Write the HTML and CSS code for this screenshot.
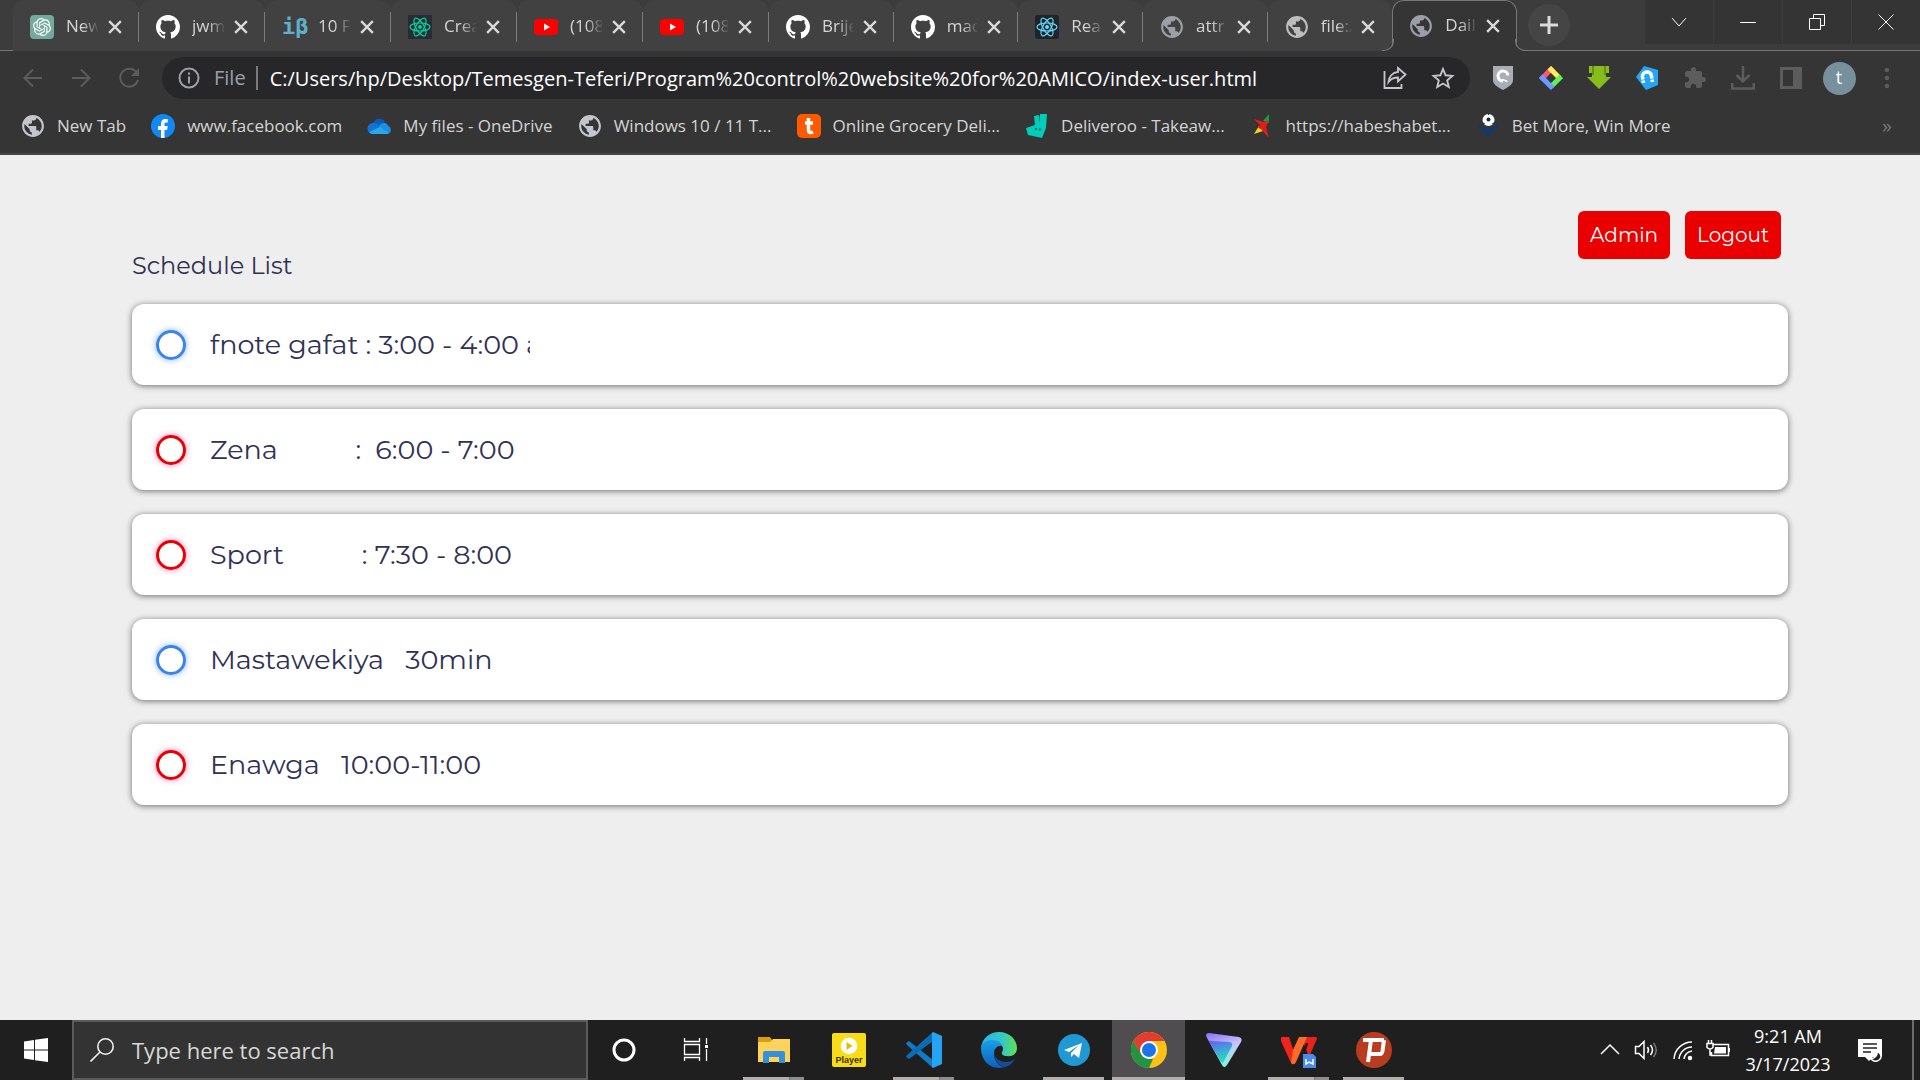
FILE: index.html
```html
<!DOCTYPE html>
<html lang="en">
<head>
<meta charset="utf-8">
<title>Daily schedule</title>
<link rel="stylesheet" href="styles.css">
</head>
<body>
<svg class="defs" aria-hidden="true">
  <symbol id="globe" viewBox="1 1 22 22"><path fill="currentColor" d="M12 2C6.480 2 2 6.480 2 12s4.480 10 10 10 10-4.480 10-10S17.520 2 12 2zm-1 17.930c-3.950-.49-7-3.850-7-7.930 0-.62.08-1.210.21-1.790L9 15v1c0 1.100.9 2 2 2v1.930zm6.900-2.540c-.26-.81-1-1.390-1.900-1.390h-1v-3c0-.55-.45-1-1-1H8v-2h2c.55 0 1-.45 1-1V7h2c1.100 0 2-.9 2-2v-.41c2.930 1.190 5 4.060 5 7.410 0 2.080-.8 3.970-2.100 5.390z"/></symbol>
  <symbol id="github" viewBox="0 0 16 16"><path fill="#fff" d="M8 0C3.58 0 0 3.58 0 8c0 3.54 2.29 6.53 5.47 7.59.4.07.55-.17.55-.38 0-.19-.01-.82-.01-1.49-2.01.37-2.53-.49-2.69-.94-.09-.23-.48-.94-.82-1.13-.28-.15-.68-.52-.01-.53.63-.01 1.08.58 1.23.82.72 1.21 1.87.87 2.33.66.07-.52.28-.87.51-1.07-1.78-.2-3.64-.89-3.64-3.95 0-.87.31-1.59.82-2.15-.08-.2-.36-1.02.08-2.12 0 0 .67-.21 2.2.82.64-.18 1.32-.27 2-.27.68 0 1.36.09 2 .27 1.53-1.04 2.2-.82 2.2-.82.44 1.1.16 1.92.08 2.12.51.56.82 1.27.82 2.15 0 3.07-1.87 3.75-3.65 3.95.29.25.54.73.54 1.48 0 1.07-.01 1.93-.01 2.2 0 .21.15.46.55.38A8.013 8.013 0 0016 8c0-4.42-3.58-8-8-8z"/></symbol>
  <symbol id="youtube" viewBox="0 0 24 24"><rect y="4" width="24" height="16" rx="4" fill="#f00"/><path d="M10 8.500v7l6-3.500z" fill="#fff"/></symbol>
  <symbol id="react" viewBox="0 0 24 24"><g fill="none" stroke="currentColor" stroke-width="1.200"><ellipse cx="12" cy="12" rx="10" ry="4"/><ellipse cx="12" cy="12" rx="10" ry="4" transform="rotate(60 12 12)"/><ellipse cx="12" cy="12" rx="10" ry="4" transform="rotate(120 12 12)"/></g><circle cx="12" cy="12" r="2" fill="currentColor"/></symbol>
  <symbol id="close" viewBox="0 0 12 12"><path d="M1 1l10 10M11 1L1 11" stroke="#dadada" stroke-width="2" fill="none"/></symbol>
</svg>

<header class="chrome">
  <div class="strip">
    <nav class="tabs" aria-label="Tabs">
      <div class="tab"><svg class="fav" viewBox="0 0 24 24"><rect width="24" height="24" rx="4" fill="#74aa9c"/><path transform="translate(3 3) scale(.75)" fill="#fff" d="M22.282 9.821a5.985 5.985 0 0 0-.516-4.911 6.046 6.046 0 0 0-6.510-2.900A6.065 6.065 0 0 0 4.981 4.182a5.985 5.985 0 0 0-3.998 2.900 6.046 6.046 0 0 0 .743 7.097 5.980 5.980 0 0 0 .511 4.911 6.051 6.051 0 0 0 6.515 2.900A5.985 5.985 0 0 0 13.260 24a6.056 6.056 0 0 0 5.772-4.206 5.989 5.989 0 0 0 3.998-2.900 6.056 6.056 0 0 0-.748-7.073zm-9.022 12.608a4.476 4.476 0 0 1-2.876-1.041l.142-.080 4.778-2.758a.795.795 0 0 0 .393-.681v-6.737l2.020 1.169a.071.071 0 0 1 .038.052v5.583a4.504 4.504 0 0 1-4.495 4.494zm-9.661-4.125a4.471 4.471 0 0 1-.535-3.014l.142.085 4.783 2.758a.771.771 0 0 0 .781 0l5.843-3.369v2.332a.080.080 0 0 1-.033.062L9.740 19.950a4.499 4.499 0 0 1-6.141-1.646zM2.341 7.896a4.485 4.485 0 0 1 2.366-1.973V11.600a.766.766 0 0 0 .388.677l5.814 3.354-2.020 1.169a.076.076 0 0 1-.071 0l-4.830-2.787A4.504 4.504 0 0 1 2.341 7.872zm16.596 3.856L13.104 8.364 15.119 7.200a.076.076 0 0 1 .071 0l4.830 2.791a4.494 4.494 0 0 1-.677 8.104v-5.677a.790.790 0 0 0-.407-.667zm2.011-3.023l-.142-.085-4.774-2.782a.776.776 0 0 0-.785 0L9.409 9.230V6.897a.066.066 0 0 1 .028-.062l4.830-2.787a4.499 4.499 0 0 1 6.680 4.660zM8.307 12.863l-2.020-1.164a.080.080 0 0 1-.038-.057V6.074a4.499 4.499 0 0 1 7.376-3.454l-.142.081L8.704 5.459a.795.795 0 0 0-.393.681zm1.098-2.365l2.602-1.500 2.607 1.500v2.999l-2.597 1.500-2.607-1.500Z"/></svg><a class="title" href="#">New</a><button class="x" aria-label="Close tab"><svg><use href="#close"/></svg></button></div>
      <div class="tab"><svg class="fav"><use href="#github"/></svg><a class="title" href="#">jwm</a><button class="x" aria-label="Close tab"><svg><use href="#close"/></svg></button></div>
      <div class="tab"><span class="fav ib">iβ</span><a class="title" href="#">10 F</a><button class="x" aria-label="Close tab"><svg><use href="#close"/></svg></button></div>
      <div class="tab"><svg class="fav cra"><use href="#react"/></svg><a class="title" href="#">Crea</a><button class="x" aria-label="Close tab"><svg><use href="#close"/></svg></button></div>
      <div class="tab"><svg class="fav"><use href="#youtube"/></svg><a class="title" href="#">(108</a><button class="x" aria-label="Close tab"><svg><use href="#close"/></svg></button></div>
      <div class="tab"><svg class="fav"><use href="#youtube"/></svg><a class="title" href="#">(108</a><button class="x" aria-label="Close tab"><svg><use href="#close"/></svg></button></div>
      <div class="tab"><svg class="fav"><use href="#github"/></svg><a class="title" href="#">Brije</a><button class="x" aria-label="Close tab"><svg><use href="#close"/></svg></button></div>
      <div class="tab"><svg class="fav"><use href="#github"/></svg><a class="title" href="#">mac</a><button class="x" aria-label="Close tab"><svg><use href="#close"/></svg></button></div>
      <div class="tab"><svg class="fav rct"><use href="#react"/></svg><a class="title" href="#">Rea</a><button class="x" aria-label="Close tab"><svg><use href="#close"/></svg></button></div>
      <div class="tab"><svg class="fav globe"><use href="#globe"/></svg><a class="title" href="#">attr</a><button class="x" aria-label="Close tab"><svg><use href="#close"/></svg></button></div>
      <div class="tab"><svg class="fav globe light"><use href="#globe"/></svg><a class="title" href="#">file:/</a><button class="x" aria-label="Close tab"><svg><use href="#close"/></svg></button></div>
      <div class="tab active"><svg class="fav globe"><use href="#globe"/></svg><a class="title" href="#">Dail</a><button class="x" aria-label="Close tab"><svg><use href="#close"/></svg></button></div>
    </nav>
    <button class="plus" aria-label="New tab"><svg viewBox="0 0 18 18"><path d="M9 0v18M0 9h18" stroke="#dadada" stroke-width="3"/></svg></button>
    <div class="wincontrols">
      <button aria-label="Search tabs"><svg viewBox="0 0 16 16"><path d="M1 4l7 8 7-8"/></svg></button>
      <button aria-label="Minimize"><svg viewBox="0 0 16 16"><path d="M0 8.500h16"/></svg></button>
      <button aria-label="Restore"><svg viewBox="0 0 16 16"><path d="M.5 4.500h11v11H.5zM4.500 4V.5h11v11H12"/></svg></button>
      <button aria-label="Close window"><svg viewBox="0 0 16 16"><path d="M.5.5l15 15M15.500.5l-15 15"/></svg></button>
    </div>
  </div>

  <div class="toolbar">
    <div class="nav">
      <button aria-label="Back"><svg viewBox="0 0 24 24"><path d="M21 12H4M12 3.500L3.500 12l8.500 8.500"/></svg></button>
      <button aria-label="Forward"><svg viewBox="0 0 24 24"><path d="M3 12h17M12 3.500l8.500 8.500-8.500 8.500"/></svg></button>
      <button aria-label="Reload"><svg viewBox="0 0 24 24"><path d="M20 7A9 9 0 1 0 21 14"/><path d="M22 2v8h-8z" fill="currentColor" stroke="none"/></svg></button>
    </div>
    <div class="omnibox">
      <svg class="info" viewBox="0 0 22 22"><circle cx="11" cy="11" r="9.500" fill="none" stroke="#9aa0a6" stroke-width="2"/><path d="M10 5.500h2v2.200h-2zM10 9.500h2v7h-2z" fill="#9aa0a6"/></svg>
      <label class="scheme" for="url">File</label>
      <input id="url" class="url" type="text" value="C:/Users/hp/Desktop/Temesgen-Teferi/Program%20control%20website%20for%20AMICO/index-user.html">
      <button aria-label="Share"><svg viewBox="0 0 24 24" fill="none" stroke="#c4c6c9" stroke-width="1.800"><path d="M1.500 5v17h17v-4"/><path d="M15 2l7.500 6.500-7.500 7v-4c-4 0-7 1-9.500 4.500.5-5.500 4-9.500 9.500-10z"/></svg></button>
      <button aria-label="Bookmark this page"><svg viewBox="0 0 24 24" fill="none" stroke="#c4c6c9" stroke-width="1.900"><path d="M12 3l2.600 6.300 6.800.6-5.200 4.500 1.600 6.700-5.800-3.600-5.800 3.600 1.600-6.700-5.200-4.500 6.800-.6z"/></svg></button>
    </div>
    <div class="exts">
      <button aria-label="Shield"><svg viewBox="0 0 24 24"><path d="M2 0h20v14c0 5-5 7-10 10C7 21 2 19 2 14z" fill="#a9adb8"/><path d="M17 9.500a5 5 0 1 0-5 5.500" fill="none" stroke="#fff" stroke-width="3"/><path d="M11.500 13.500l5 2" stroke="#fff" stroke-width="1.500"/></svg></button>
      <button aria-label="Colors"><svg viewBox="0 0 24 24" fill="none" stroke-width="5"><path d="M13.700 1.700l-12 12" stroke="#fb5779"/><path d="M10.300 1.700l10 10" stroke="#ffee58"/><path d="M22.300 10.300l-10 10" stroke="#5ff25c"/><path d="M1.700 10.300l12 12" stroke="#6a9bff"/></svg></button>
      <button aria-label="Downloader"><svg viewBox="0 0 24 24"><path d="M2 0h20v7h-3v4h5L12 23 0 11h5V7H2z" fill="#86bd1c"/><path d="M6 0v9M18 0v9" stroke="#46690c"/></svg></button>
      <button aria-label="Magnet"><svg viewBox="0 0 24 24"><path d="M9 0l14 4v15l-12 5L1 11z" fill="#23a6f8"/><path d="M8.500 17l-1-6a4.500 4.500 0 0 1 9-1l1 6" fill="none" stroke="#fff" stroke-width="3.500"/><path d="M5 14.500l6-1M15 13.500l5-1" stroke="#23a6f8"/></svg></button>
      <button aria-label="Extensions"><svg viewBox="0 0 24 24"><path fill="#5c5c5c" d="M20.500 11H19V7c0-1.100-.9-2-2-2h-4V3.500C13 2.120 11.880 1 10.500 1S8 2.120 8 3.500V5H4c-1.100 0-2 .9-2 2v3.800h1.500c1.490 0 2.700 1.210 2.700 2.700s-1.210 2.700-2.700 2.700H2V20c0 1.100.9 2 2 2h3.800v-1.500c0-1.490 1.210-2.700 2.700-2.700s2.700 1.210 2.700 2.700V22H17c1.100 0 2-.9 2-2v-4h1.500a2.500 2.500 0 0 0 0-5z"/></svg></button>
      <button aria-label="Downloads"><svg viewBox="0 0 24 24" fill="none" stroke="#5c5c5c" stroke-width="2.500"><path d="M12 0v15M5.500 9l6.500 6.500L18.500 9M1.200 17v5.500h21.600V17"/></svg></button>
      <button aria-label="Side panel"><svg viewBox="0 0 24 24"><path fill="#5c5c5c" fill-rule="evenodd" d="M1 1h22v22H1zM4 4h10v16H4z"/></svg></button>
      <button class="avatar" aria-label="Profile"><span>t</span></button>
      <button aria-label="Menu"><svg viewBox="0 0 24 24" fill="#5c5c5c"><circle cx="12" cy="4" r="2.300"/><circle cx="12" cy="12" r="2.300"/><circle cx="12" cy="20" r="2.300"/></svg></button>
    </div>
  </div>

  <nav class="bookmarks" aria-label="Bookmarks">
    <a href="#"><svg class="globe"><use href="#globe"/></svg>New Tab</a>
    <a href="#"><svg viewBox="0 0 24 24"><circle cx="12" cy="12" r="12" fill="#1089f3"/><path d="M10 24v-8H7v-4h3V9.500C10 6.500 11.700 5 14.200 5l2.600.2v3.200h-1.600c-1.300 0-1.700.8-1.700 1.700V12h3.200l-.6 4h-2.600v8z" fill="#fff"/></svg>www.facebook.com</a>
    <a href="#"><svg viewBox="0 0 24 24"><path d="M6 10a6.500 6.500 0 0 1 12-2l-4 8z" fill="#0a5cb8"/><path d="M5 20a5.500 5.500 0 0 1 2-11c3 0 5 2 8 4l-6 7z" fill="#1173d4"/><path d="M12 12c2-4 9-4 9 0 4 1 4 8-1 8h-9z" fill="#1b8fe6"/><path d="M2 18l11-5 9 6a5 5 0 0 1-3 1H5a5 5 0 0 1-3-2z" fill="#28a8ea"/></svg>My files - OneDrive</a>
    <a href="#"><svg class="globe"><use href="#globe"/></svg>Windows 10 / 11 T...</a>
    <a href="#"><svg viewBox="0 0 24 24"><rect width="24" height="24" rx="5" fill="#ff5a00"/><path d="M11.500 4v12.500c0 2 2 2.500 4.500 1.500M8 9h8" fill="none" stroke="#fff" stroke-width="3.500"/></svg>Online Grocery Deli...</a>
    <a href="#"><svg viewBox="0 0 24 24"><path d="M9 2l5-1 1 8V0h7l-1 14-4 10L3 21 1 14l9-3z" fill="#00ccbc"/><circle cx="11" cy="15" r="1" fill="#244"/><circle cx="15" cy="15.500" r="1" fill="#244"/></svg>Deliveroo - Takeaw...</a>
    <a href="#"><svg viewBox="0 0 24 24"><path d="M19 0v9l-6-2z" fill="#1f9b3c"/><path d="M4 20l5-8 4 5z" fill="#f5d316"/><path d="M4 5l10 3 5-1-3 6 3 11-8-9-3-1 2-3z" fill="#e11b22"/></svg>https://habeshabet...</a>
    <a href="#"><svg viewBox="0 0 24 24"><path d="M2 10l8 5h4l8-5-3 6-4 2-3 6-3-6-4-2z" fill="#0b3a78"/><circle cx="12.500" cy="6" r="6" fill="#fff"/><circle cx="12.500" cy="5.500" r="2" fill="#0b2a55"/><path d="M7 9l2 1M18 9l-2 1M12.500 0v1" stroke="#0b2a55"/></svg>Bet More, Win More</a>
    <button class="more" aria-label="More bookmarks">»</button>
  </nav>
</header>

<main class="page">
  <div class="top">
    <h1>Schedule List</h1>
    <div class="actions"><button>Admin</button><button>Logout</button></div>
  </div>
  <ul class="list">
    <li><span class="dot blue"></span><input type="text" aria-label="Entry 1" value="fnote gafat : 3:00 - 4:00 am"></li>
    <li><span class="dot"></span><input type="text" aria-label="Entry 2" value="Zena           :  6:00 - 7:00"></li>
    <li><span class="dot"></span><input type="text" aria-label="Entry 3" value="Sport           : 7:30 - 8:00"></li>
    <li><span class="dot blue"></span><input type="text" aria-label="Entry 4" value="Mastawekiya   30min"></li>
    <li><span class="dot"></span><input type="text" aria-label="Entry 5" value="Enawga   10:00-11:00"></li>
  </ul>
</main>

<footer class="taskbar">
  <button class="start" aria-label="Start"><svg viewBox="0 0 24 24" fill="#fff"><path d="M0 3.500L10 2v9.500H0zM11 1.800L24 0v11.500H11zM0 12.500h10V22L0 20.500zM11 12.500h13V24l-13-1.800z"/></svg></button>
  <div class="search">
    <svg viewBox="0 0 24 24" fill="none" stroke="#f0f0f0" stroke-width="1.600"><circle cx="15.500" cy="8.500" r="7.700"/><path d="M10 14L.5 23.500"/></svg>
    <input type="text" aria-label="Search" placeholder="Type here to search">
  </div>
  <div class="shell">
    <button aria-label="Cortana"><svg viewBox="0 0 36 36"><circle cx="18" cy="18" r="10" fill="none" stroke="#fff" stroke-width="3"/></svg></button>
    <button aria-label="Task view"><svg viewBox="0 0 36 36" fill="none" stroke="#fff" stroke-width="1.300"><path d="M6.500 6v3.500h15V6M6.500 29v-3.500h15V29M6.500 12.500h15v10h-15zM28.500 6v6M28.500 17v12"/><path d="M27 13h3v3h-3z" fill="#fff" stroke="none"/></svg></button>
  </div>
  <div class="apps">
    <button class="open multi" aria-label="File Explorer"><svg viewBox="0 0 36 36"><path d="M2 5h12l2 3h18v7H2z" fill="#dd9c0a"/><path d="M2 10h12l3-3h17v23H2z" fill="#ffd35b"/><path d="M7 31V21q0-2 2-2h18q2 0 2 2v10h-6v-6H13v6z" fill="#3590dc"/></svg></button>
    <button aria-label="Player"><svg viewBox="0 0 36 36"><rect x="1" y="1" width="34" height="34" rx="2" fill="#f8dc17"/><circle cx="18" cy="14" r="8.300" fill="#fff"/><path d="M15.500 10v8l6-4z" fill="#e3bd00"/><text x="18" y="31" text-anchor="middle" class="player">Player</text></svg></button>
    <button class="open multi" aria-label="Code"><svg viewBox="0 0 36 36"><path d="M0 11l3-2 24 19v8L1 13z" fill="#0f7cc4"/><path d="M0 25l3 2L27 9V0L1 23z" fill="#0a6cb5"/><path d="M27 0l9 4v28l-9 4-1-1V1z" fill="#24a4f2"/></svg></button>
    <button aria-label="Edge"><svg viewBox="0 0 36 36"><defs><linearGradient id="eg"><stop stop-color="#27b6ef"/><stop offset=".6" stop-color="#35c7c4"/><stop offset="1" stop-color="#63e04d"/></linearGradient><linearGradient id="eb" x2="0" y2="1"><stop stop-color="#1a9fe8"/><stop offset="1" stop-color="#0c61bd"/></linearGradient></defs><path d="M0 16C1 6 9 0 18 0c11 0 18 8 18 16 0 6-5 9-10 8-4 0-6-2-5-4 2-3 1-7-3-8C10 9 3 11 0 16z" fill="url(#eg)"/><path d="M0 16c1-6 6-8 11-8 6 0 10 3 10 6-5-1-8 3-8 8 0 8 7 14 11 13-13 4-24-5-24-19z" fill="url(#eb)"/><path d="M13 20c0 8 5 14 11 15 4-1 8-4 10-8-7 5-20 4-21-7z" fill="#114f9c"/></svg></button>
    <button class="open" aria-label="Telegram"><svg viewBox="0 0 36 36"><circle cx="18" cy="18" r="16" fill="#2098d4"/><path d="M8 18l18-7-3 15-5-4-3 3v-4l8-8-10 7z" fill="#fff"/></svg></button>
    <button class="open current" aria-label="Chrome"><svg viewBox="0 0 36 36"><circle cx="18" cy="18" r="18" fill="#fbc116"/><path d="M2.400 9l8 13.500L18 27h4l-4 9A18 18 0 0 1 2.400 9z" fill="#229342"/><path d="M2.400 9a18 18 0 0 1 31.200 0H18l-7.800 13.500z" fill="#e33b2e"/><circle cx="18" cy="18" r="9" fill="#fff"/><circle cx="18" cy="18" r="7" fill="#1a73e8"/></svg></button>
    <button aria-label="VPN"><svg viewBox="0 0 36 36"><defs><linearGradient id="pv" x2=".3" y2="1"><stop stop-color="#6d4aff"/><stop offset="1" stop-color="#22e0c0"/></linearGradient><linearGradient id="pw" x2=".3" y2="1"><stop stop-color="#8d6bff"/><stop offset=".5" stop-color="#c9c4ff"/><stop offset="1" stop-color="#8ff0dc"/></linearGradient></defs><path d="M0 4Q0 1 3 1l30 4q4 1 2 5L21 33q-3 4-5 0z" fill="url(#pw)"/><path d="M1 6q1 3 5 3l18 1q3 1 2 4L17 31l-2-1z" fill="url(#pv)"/></svg></button>
    <button class="open multi" aria-label="WPS"><svg viewBox="0 0 36 36"><path d="M0 5h8l5 15 1 4-2 8q-2-1-3-3L0 9z" fill="#f0241a"/><path d="M21 5h14q2 1 0 4l-7 16-4-10z" fill="#e8241a"/><path d="M26 11l-3 10" stroke="#211c1c" stroke-width="2.500"/><path d="M12 18l6-13h8L15 30q-2 4-5 1z" fill="#ff6a2b"/><path d="M22 22h10l3 3v11H22z" fill="#4a8bf0"/><path d="M25 27v5l3-2 4 2v-5" fill="none" stroke="#fff" stroke-width="1.500"/></svg></button>
    <button class="open" aria-label="P"><svg viewBox="0 0 36 36"><circle cx="18" cy="18" r="18" fill="#b93c20"/><path d="M7 8h21M15 8l-3 22M14 22h10q2 0 2.500-3L28 8" fill="none" stroke="#fff" stroke-width="4"/></svg></button>
  </div>
  <div class="tray">
    <button aria-label="Hidden icons"><svg viewBox="0 0 24 24"><path d="M3 16l9-9 9 9"/></svg></button>
    <button aria-label="Volume"><svg viewBox="0 0 24 24"><path d="M1.500 8.500h3.500l5-5v17l-5-5H1.500zM13.500 9q2 3 0 6M16.500 7q4 5 0 10"/><path d="M19.500 5q5.500 7 0 14" stroke="#777"/></svg></button>
    <button aria-label="Network"><svg viewBox="0 0 24 24"><path d="M4 21A18 18 0 0 1 22 4M9 21A13 13 0 0 1 22 9M14 21a9 9 0 0 1 8-8"/><circle cx="20" cy="20" r="1.500" fill="#fff"/></svg></button>
    <button aria-label="Battery"><svg viewBox="0 0 24 24"><path d="M7.500 6.500h15v11h-17V14M1 5.500h6v4q-3 3-6 0zM2.500 5V2M5.500 5V2M4 11v6h2M23.500 10v4"/><path d="M9 9h11v6.500H8z" fill="#fff" stroke="none"/></svg></button>
    <div class="clock"><time>9:21 AM</time><span>3/17/2023</span></div>
    <button class="notice" aria-label="Notifications"><svg viewBox="0 0 24 24"><path d="M0 1h24v18h-9l-4 4-4-4H0z" fill="#fff" stroke="none"/><path d="M5 6h14M5 10h14M5 14h8" stroke="#222"/><path d="M19 13q1 6-6 8 4 4 8 1 5-4-2-9z" fill="#222"/></svg></button>
  </div>
</footer>
</body>
</html>
```
FILE: styles.css
```css
* { box-sizing: border-box; }
body {
  margin: 0;
  min-height: 100vh;
  display: flex;
  flex-direction: column;
  background: #eee;
  font-family: "Open Sans", "Noto Sans", sans-serif;
}
button { border: 0; padding: 0; background: none; color: inherit; font: inherit; }
input { border: 0; padding: 0; background: none; outline: 0; font: inherit; color: inherit; }
a { color: inherit; text-decoration: none; }
svg { display: block; flex: none; }
.defs { position: absolute; width: 0; height: 0; }

/* browser frame */
.chrome { background: #353535; color: #d4d4d4; border-bottom: 2px solid #454545; }
.strip {
  display: flex;
  height: 51px;
  padding-left: 13px;
  background: #3c3c3c;
  border-bottom: 1px solid #777;
}
.tabs { display: grid; grid-template-columns: repeat(6, 126px) repeat(6, 1fr); width: 1504px; }
.tab {
  display: flex;
  align-items: center;
  position: relative;
  min-width: 0;
  padding: 2px 17px 0 17px;
  background: #414141;
  border-radius: 12px 12px 0 0;
  font-size: 17px;
}
.tab:not(.active):not(:nth-child(11))::after {
  content: "";
  position: absolute;
  right: 0;
  top: 12px;
  width: 1px;
  height: 30px;
  background: #7c7c7c;
}
.fav { width: 24px; height: 24px; }
.fav.globe { color: #9aa0a6; }
.fav.globe.light { color: #bdbdbd; }
.cra { background: #282c34; color: #09d3a0; }
.rct { background: #20232a; color: #61dafb; border-radius: 3px; }
.ib { color: #5fb0cc; font: bold 22px/24px "DejaVu Sans Mono", monospace; }
.title {
  flex: 1;
  min-width: 0;
  height: 26px;
  line-height: 24px;
  margin: 0 10px 0 12px;
  overflow: hidden;
  white-space: nowrap;
  mask-image: linear-gradient(90deg, #000 50%, rgba(0, 0, 0, .1));
}
.x svg { width: 14px; height: 14px; }
.active {
  height: 51px;
  padding: 0 16px;
  background: #353535;
  border: 1px solid #777;
  border-bottom: 0;
  z-index: 1;
}
.active::before, .active::after {
  content: "";
  position: absolute;
  bottom: 0;
  width: 11px;
  height: 11px;
  border: 0 solid #777;
}
.active::before { left: -11px; border-width: 0 1px 1px 0; border-radius: 0 0 10px 0; box-shadow: 3px 3px 0 #353535; }
.active::after { right: -11px; border-width: 0 0 1px 1px; border-radius: 0 0 0 10px; box-shadow: -3px 3px 0 #353535; }
.plus {
  display: grid;
  place-items: center;
  width: 42px;
  height: 42px;
  margin: 4px 0 0 11px;
  border-radius: 50%;
  background: #454545;
}
.plus svg { width: 18px; height: 18px; }
.wincontrols { display: flex; gap: 1px; margin-left: auto; height: 44px; }
.wincontrols button { display: grid; place-items: center; width: 68px; background: #343434; }
.wincontrols svg { width: 16px; height: 16px; fill: none; stroke: #fff; }

.toolbar { display: flex; align-items: center; padding: 6px 9px; }
.nav, .exts { display: flex; flex: none; }
.nav button, .exts button { display: grid; place-items: center; width: 48px; height: 42px; }
.nav svg { width: 24px; height: 24px; fill: none; stroke: currentColor; stroke-width: 2; }
.nav { color: #5c5c5c; margin-right: 9px; }
.exts { margin-left: 9px; }
.exts svg { width: 24px; height: 24px; }
.avatar span {
  width: 33px;
  height: 33px;
  border-radius: 50%;
  background: #78909c;
  color: #fff;
  font-size: 18px;
  line-height: 31px;
}
.omnibox {
  flex: 1;
  min-width: 0;
  display: flex;
  align-items: center;
  height: 42px;
  padding: 0 15px 0 16px;
  border-radius: 21px;
  background: #27272a;
  font-size: 20px;
}
.info { width: 22px; height: 22px; }
.scheme { color: #9aa0a6; margin-left: 14px; padding-right: 10px; line-height: 24px; border-right: 2px solid #77797d; }
.url { flex: 1; min-width: 0; margin-left: 12px; color: #fff; }
.omnibox button { width: 24px; margin-left: 24px; }
.omnibox button svg { width: 24px; height: 24px; }

.bookmarks {
  display: flex;
  align-items: center;
  gap: 25px;
  height: 48px;
  padding: 0 28px 7px 21px;
  font-size: 17px;
  white-space: nowrap;
}
.bookmarks a { display: flex; align-items: center; gap: 12px; }
.bookmarks svg { width: 24px; height: 24px; }
.bookmarks .globe { color: #c3c6ca; }
.more { margin-left: auto; color: #777; font-size: 20px; }

/* schedule */
.page {
  flex: 1;
  padding: 56px 132px;
  color: #313154;
  font-family: "Montserrat", "Inter", sans-serif;
}
.top { display: flex; justify-content: space-between; align-items: flex-end; height: 69px; margin-bottom: 24px; }
h1 { margin: 0; font-size: 24px; font-weight: 400; line-height: 28px; }
.actions { display: flex; gap: 15px; align-self: flex-start; margin-right: 7px; }
.actions button {
  height: 48px;
  padding: 0 12px;
  border-radius: 6px;
  background: #ea0000;
  color: #fff;
  font-size: 20px;
  font-weight: 400;
}
.list { display: grid; gap: 24px; margin: 0; padding: 0; list-style: none; }
.list li {
  display: flex;
  align-items: center;
  height: 81px;
  padding: 0 24px;
  border-radius: 12px;
  background: #fff;
  box-shadow: 0 1px 6px rgba(0, 0, 0, .55);
}
.dot {
  width: 30px;
  height: 30px;
  border: 3px solid #ea0000;
  border-radius: 50%;
  box-shadow: 0 0 6px rgba(234, 0, 140, .5);
}
.blue { border-color: #3a82ee; box-shadow: 0 0 6px rgba(58, 130, 238, .6); }
.list input { width: 320px; margin-left: 24px; font-size: 27px; }

/* desktop taskbar */
.taskbar { display: flex; height: 60px; background: #1f1f20; color: #fff; }
.taskbar button { display: grid; place-items: center; }
.start { width: 72px; }
.start svg { width: 24px; height: 24px; }
.search {
  display: flex;
  align-items: center;
  width: 516px;
  padding: 0 16px;
  border: 2px solid #5b5b5b;
  background: #333;
  font-size: 22px;
}
.search svg { width: 24px; height: 24px; }
.search input { flex: 1; min-width: 0; margin-left: 18px; }
.search input::placeholder { color: #d8d8d8; opacity: 1; }
.shell, .apps { display: flex; }
.shell button { width: 72px; }
.shell svg, .apps svg { width: 36px; height: 36px; }
.apps { gap: 2px; margin-left: 5px; }
.apps button { width: 73px; position: relative; }
.open::after {
  content: "";
  position: absolute;
  left: 6px;
  right: 6px;
  bottom: 0;
  height: 3px;
  background: #b3aeac;
}
.multi::after { background: linear-gradient(90deg, #b3aeac 46px, #777 46px, #8d8d8d 48px); }
.current { background: #504d50; }
.current::after { left: 0; right: 0; }
.player { font: bold 9px "Liberation Sans", sans-serif; fill: #3a3200; }
.tray { display: flex; align-items: center; gap: 12px; margin-left: auto; padding-right: 30px; position: relative; }
.tray::after { content: ""; position: absolute; right: 6px; top: 0; bottom: 0; width: 2px; background: #6c6c6c; }
.tray svg { width: 24px; height: 24px; fill: none; stroke: #fff; stroke-width: 1.5; }
.clock { display: grid; width: 92px; font-size: 18px; line-height: 28px; text-align: center; }
.notice { margin-left: 4px; padding: 0 8px; }
```
